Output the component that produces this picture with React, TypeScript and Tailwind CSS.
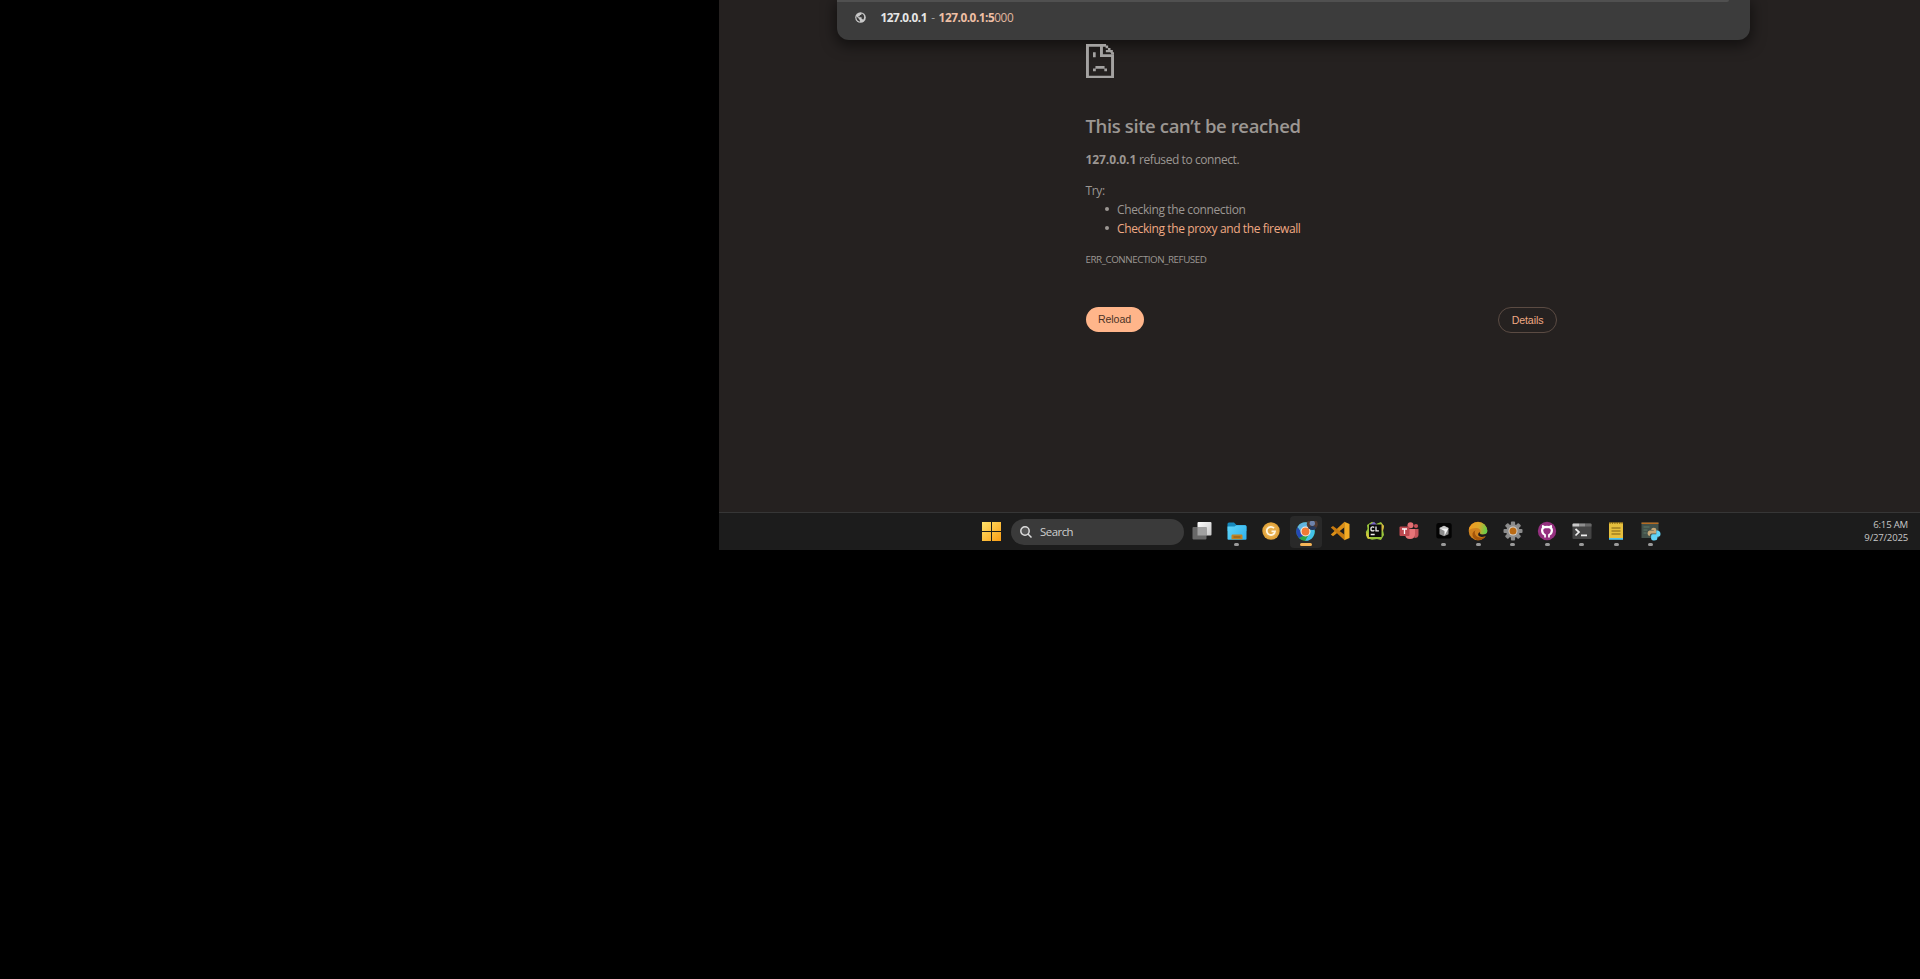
import React from "react";

const SEGOE = "font-['Open_Sans','Noto_Sans',sans-serif]";

function SadPage() {
  return (
    <svg className="block h-[34.5px] w-7" viewBox="0 0 12 15" preserveAspectRatio="none" fill="#a4a2a1">
      <path d="M0 0H8.6V1.200H1.250V13.750H10.750V5.700H6V1H7.250V4.500H12V15H0Z" />
      <path d="M3 3.600h1.150v2.200H3zM8.400 .6h1.100v1.200H8.400zM9.400 1.700h1.100v1.100H9.400zM8.500 2.600h2v1h-2zM10.400 2.600h1.100v1.200h-1.100zM10.750 3.600h1.250v1h-1.250zM4.050 9.600h3.900v1.200H4.050zM3 10.700h1.200v1.100H3zM7.850 10.700H9v1.100H7.850z" />
    </svg>
  );
}

function Globe() {
  return (
    <svg className="block size-[11px]" viewBox="0 0 24 24">
      <circle cx="12" cy="12" r="11.500" fill="#c8c8c8" />
      <path d="M3 9.500 9.500 16v1.500l1.500 1.200V21.500C5 20.500 2.500 16 3 9.500ZM14.500 3v1.500c0 1-.9 2-2 2h-2v2c0 .6-.5 1-1 1h-2v2h6c.6 0 1 .4 1 1v3h1c.9 0 1.700.6 1.900 1.400C21.500 13 21 5.500 14.500 3Z" fill="#3c3c3c" />
    </svg>
  );
}

function StartIcon() {
  return (
    <svg className="block size-[19px]" viewBox="0 0 19 19">
      <defs>
        <linearGradient id="start" x1="0" y1="0" x2="19" y2="19" gradientUnits="userSpaceOnUse">
          <stop stopColor="#ffe36a" />
          <stop offset="1" stopColor="#fa9d14" />
        </linearGradient>
      </defs>
      <path d="M0 0h9v9H0zM10 0h9v9h-9zM0 10h9v9H0zM10 10h9v9h-9z" fill="url(#start)" />
    </svg>
  );
}

function TaskView() {
  return (
    <svg className="block size-5" viewBox="0 0 20 20">
      <defs>
        <linearGradient id="tv" x1="5" y1="1" x2="19" y2="14" gradientUnits="userSpaceOnUse">
          <stop stopColor="#ffffff" />
          <stop offset="1" stopColor="#c9c9c9" />
        </linearGradient>
      </defs>
      <rect x="5.500" y="1" width="14" height="13.500" rx="1" fill="url(#tv)" />
      <rect x="0.500" y="6" width="14" height="12.500" rx="1" fill="#686868" />
      <path d="M5.500 6h9v8.500h-9z" fill="#a0a0a0" />
    </svg>
  );
}

function Folder() {
  return (
    <svg className="block size-5" viewBox="0 0 20 20">
      <defs>
        <linearGradient id="fo" x1="0" y1="3" x2="20" y2="19" gradientUnits="userSpaceOnUse">
          <stop stopColor="#62d8fb" />
          <stop offset="1" stopColor="#2fb0ec" />
        </linearGradient>
      </defs>
      <path d="M.5 3q0-1.500 1.500-1.500h5l2.500 2.500H18q1.500 0 1.500 1.500V10H.5Z" fill="#1689bd" />
      <path d="M.5 5.500h7l2-1.300H18q1.500 0 1.500 1.500V18q0 .8-1 .8h-17q-1 0-1-.8Z" fill="url(#fo)" />
      <path d="M4.500 18.300V14.700q0-1.200 1.200-1.200h8.600q1.200 0 1.200 1.200v3.600Z" fill="#c08324" />
      <path d="M6.500 15.500h7v1h-7z" fill="#8a5410" />
    </svg>
  );
}

function Coin() {
  return (
    <svg className="block size-5" viewBox="0 0 20 20">
      <circle cx="10" cy="10" r="8.700" fill="#e0a33a" />
      <circle cx="10" cy="10" r="6.800" fill="#e5ac4a" />
      <path d="M13 7.200A4.100 4.100 0 1 0 14 10.300H10.500" fill="none" stroke="#fff6df" strokeWidth="1.800" />
    </svg>
  );
}

function Chrome() {
  return (
    <svg className="block h-5 w-6" viewBox="0 0 24 20">
      <circle cx="11.500" cy="10.500" r="9.300" fill="#2f9e48" />
      <path d="M3.400 5.900A9.300 9.300 0 0 1 16 2.400L19 6H11L7 11Z" fill="#62b4e0" />
      <path d="M11.500 6h8A9.300 9.300 0 0 1 11 19.800L15 12Z" fill="#43c2e9" />
      <path d="M3.400 5.900A9.300 9.300 0 0 0 8 19.100L11 15 7 11Z" fill="#2448b5" />
      <path d="M11 19.800A9.300 9.300 0 0 1 5 17l6-3 4.500-1.500Z" fill="#2ea548" />
      <circle cx="11.500" cy="10.500" r="5" fill="#f5eee8" />
      <circle cx="11.500" cy="10.500" r="3.900" fill="#f07a35" />
      <circle cx="18.300" cy="3.300" r="5.500" fill="#513a31" />
      <circle cx="18.300" cy="2.300" r="2.700" fill="#6e83ac" />
      <path d="M14.500 7q4-4 8 0-4 4-8 0Z" fill="#25395e" />
    </svg>
  );
}

function VsCode() {
  return (
    <svg className="block size-5" viewBox="0 0 20 20">
      <path d="M14.500.8v5.500L3 15.200.8 13.500Z" fill="#dc8f17" />
      <path d="M14.500 19.300v-5.500L3 4.900.8 6.600Z" fill="#c87b10" />
      <path d="M14.300.8 19.500 3v14l-5.200 2.300Z" fill="#f2ab25" />
    </svg>
  );
}

function CLion() {
  return (
    <svg className="block size-5" viewBox="0 0 20 20">
      <path d="M2 4 7 .8 11 3l5-2 3 4-1 4 1 5-3 5-4-1-5 .8L2 17 .8 11 2.500 8Z" fill="#98c43c" />
      <path d="M5 3.500l4-2.700 3 3.200H5Z" fill="#7a65c8" />
      <path d="m16 2 3 3-1 5-2-1Z" fill="#d6b840" />
      <path d="M2 10l-1 4 2 4 3-1-2-2Z" fill="#d3c63c" />
      <rect x="4" y="3.500" width="12.500" height="12.500" fill="#090909" />
      <path d="M9.200 6.500Q8.500 5.900 7.700 5.900 5.900 5.900 5.900 7.900T7.700 9.900Q8.600 9.900 9.300 9.200M11 5.400v4.400h2.900M5.700 13.500h4" fill="none" stroke="#eee" strokeWidth="1.300" />
    </svg>
  );
}

function Teams() {
  return (
    <svg className="block size-5" viewBox="0 0 20 20">
      <circle cx="11.500" cy="4.200" r="3" fill="#e36e72" />
      <circle cx="17" cy="5" r="2.100" fill="#c95359" />
      <path d="M14 8h5.500v5.500q0 3.500-4 3.500Z" fill="#c4545a" />
      <path d="M6 8h10v5q0 5-5 5t-5-5Z" fill="#e67478" />
      <rect x=".5" y="5.500" width="10" height="9.500" rx="1" fill="#bd4950" />
      <path d="M3 8h5M5.500 8v5" stroke="#fff" strokeWidth="1.300" />
    </svg>
  );
}

function Cursor() {
  return (
    <svg className="block size-5" viewBox="0 0 20 20">
      <rect x="2.300" y="2" width="15.400" height="15.500" rx="2.500" fill="#030303" />
      <path d="m10 4.800 4.500 2v6.500L10 15.300l-4.500-2V6.800Z" fill="#8d8d8d" />
      <path d="M5.500 7.200h9L10.500 14.800V10Z" fill="#f4f4f4" />
      <path d="m10 4.800 4.500 2.400h-9Z" fill="#c4c4c4" />
    </svg>
  );
}

function Edge() {
  return (
    <svg className="block size-5" viewBox="0 0 20 20">
      <defs>
        <linearGradient id="ed" x1="1" y1="4" x2="19" y2="8" gradientUnits="userSpaceOnUse">
          <stop stopColor="#f29a1f" />
          <stop offset=".55" stopColor="#dba72b" />
          <stop offset="1" stopColor="#5fd04c" />
        </linearGradient>
      </defs>
      <circle cx="10" cy="10" r="9.300" fill="#d0821e" />
      <path d="M.8 9A9.300 9.300 0 0 1 19.300 9.500q0 4-4.300 4-3 0-3.200-1.300.9-.8.700-2.200-.4-2.700-4-3Q4 6.800.8 9Z" fill="url(#ed)" />
      <path d="M7 10q-1 4 3 6 4 1.500 7.500-.5Q14 20 9 19.200 4 17 4.500 12.500 5 10 8 9Z" fill="#a4560b" />
      <path d="M11.800 12.200q.3 1.300 3.200 1.300 3 0 4.600-2l.4 3-2.500.8q-5 1.500-7-.5-1-2 1-4Z" fill="#1c1c1c" />
    </svg>
  );
}

function Gear() {
  return (
    <svg className="block size-5" viewBox="0 0 20 20">
      <g fill="#8b8b8b">
        <rect x="7.900" y=".5" width="4.200" height="19" rx="1" />
        <rect x="7.900" y=".5" width="4.200" height="19" rx="1" transform="rotate(45 10 10)" />
        <rect x="7.900" y=".5" width="4.200" height="19" rx="1" transform="rotate(90 10 10)" />
        <rect x="7.900" y=".5" width="4.200" height="19" rx="1" transform="rotate(135 10 10)" />
      </g>
      <circle cx="10" cy="10" r="6.800" fill="#8f8f8f" />
      <circle cx="10" cy="10" r="4.500" fill="#d8d0c6" />
      <circle cx="10" cy="10" r="3.500" fill="#ba6a13" />
    </svg>
  );
}

function GitHub() {
  return (
    <svg className="block size-5" viewBox="0 0 20 20">
      <circle cx="10" cy="10" r="9.200" fill="#953080" />
      <path d="M7.200 16.500v-2Q4 13 4 9.200q0-1.600 1-2.600-.3-1.300.2-2.500 1.300.1 2.500 1 2.200-.6 4.500 0 1.300-.9 2.600-1 .5 1.200.2 2.500 1 1 1 2.600 0 3.800-3.200 5.300v2Z" fill="#fff" />
      <path d="M8.900 17v-3.500Q6.500 12.800 6.200 9.500q0-2.100 1.800-2.300h4q1.800.2 1.800 2.300-.3 3.300-2.700 4V17Z" fill="#953080" />
    </svg>
  );
}

function Terminal() {
  return (
    <svg className="block size-5" viewBox="0 0 20 20">
      <rect x=".5" y="2.500" width="19" height="15.500" rx="1" fill="#444" />
      <path d="M.5 5.500v-2q0-1 1-1H7v3Z" fill="#c9c9c9" />
      <path d="M7 2.500h6v3H7z" fill="#8e8e8e" />
      <path d="M13 2.500h5.500q1 0 1 1v2H13Z" fill="#686868" />
      <path d="m3.500 8 3.500 3-3.500 3.500M9 14.300h6" fill="none" stroke="#eee" strokeWidth="1.700" />
    </svg>
  );
}

function Notes() {
  return (
    <svg className="block size-5" viewBox="0 0 20 20">
      <rect x="3" y="1.500" width="14" height="16" fill="#e6bf3d" />
      <path d="M3 17h14v1.800H3z" fill="#4fc3f0" />
      <path d="M3.500 1.800h13" stroke="#7a5b10" strokeWidth="1.800" strokeDasharray="1.200 1.200" />
      <path d="M5.500 7h9M5.500 10h9M5.500 13h9" stroke="#7c6015" strokeWidth="1.200" />
    </svg>
  );
}

function PythonWindow() {
  return (
    <svg className="block h-5 w-6" viewBox="0 0 24 20">
      <rect x="2.500" y="1.500" width="17" height="15.500" fill="#43514a" />
      <path d="M2.500 1.500h17v1.500h-17z" fill="#b56b22" />
      <path d="M4.500 6h6M4.500 9h4M4.500 12h3" stroke="#5e7a68" />
      <path d="M12.300 8.500q0-1.700 2.500-1.700t2.500 1.700v4h-5q-1.500 0-1.500 2.500-2.300-.3-2.300-2.700t2-2.800h4.300v-.5h-2.500Z" fill="#c7a878" />
      <path d="M17.300 12.500V9.500h1.500q2.700.5 2.700 3.500 0 2.700-2.200 2.700h-1v1.800q0 1.900-3 1.900t-3.200-2v-2.400q0-1.700 1.500-1.700h3.700Z" fill="#62d3f5" />
    </svg>
  );
}

type App = { name: string; icon: React.ReactNode; open?: boolean; active?: boolean };

const apps: App[] = [
  { name: "Task View", icon: <TaskView /> },
  { name: "File Explorer", icon: <Folder />, open: true },
  { name: "Coin", icon: <Coin /> },
  { name: "Chrome", icon: <Chrome />, active: true },
  { name: "VS Code", icon: <VsCode /> },
  { name: "CLion", icon: <CLion /> },
  { name: "Teams", icon: <Teams /> },
  { name: "Cursor", icon: <Cursor />, open: true },
  { name: "Edge", icon: <Edge />, open: true },
  { name: "Settings", icon: <Gear />, open: true },
  { name: "GitHub", icon: <GitHub />, open: true },
  { name: "Terminal", icon: <Terminal />, open: true },
  { name: "Notes", icon: <Notes />, open: true },
  { name: "Python", icon: <PythonWindow />, open: true },
];

function TaskbarApp({ app }: { app: App }) {
  return (
    <div className="flex w-[34.5px] shrink-0 justify-center">
      <div className={`flex h-8 w-8 flex-col items-center rounded-sm pt-[5.5px] ${app.active ? "bg-[#292929]" : ""}`}>
        {app.icon}
        {app.open && <span className="mt-[2px] h-[2.5px] w-[5px] rounded-full bg-[#9a9a9a]" />}
        {app.active && <span className="mt-[2px] h-[2.5px] w-[12px] rounded-full bg-[#f5b557]" />}
      </div>
    </div>
  );
}

function Suggestions() {
  return (
    <div className="ml-[117.5px] h-[39.5px] w-[913px] rounded-b-[12px] bg-[#3c3c3c] shadow-[0_4px_14px_2px_rgba(0,0,0,0.5)]">
      <div className="h-[2px] w-[892px] rounded-br-[6px] bg-[#505050]" />
      <div className="flex items-center pt-[5px] pl-[18px]">
        <Globe />
        <p className="ml-[15px] flex h-[21px] items-center text-[11.8px] tracking-[-0.45px] whitespace-pre">
          <b className="text-[#e6e6e6]">127.0.0.1</b>
          <span className="px-[1.5px] text-[#a0a0a0]"> - </span>
          <b className="text-[#eebfa4]">127.0.0.1:5</b>
          <span className="text-[#e0b79f]">000</span>
        </p>
      </div>
    </div>
  );
}

function ErrorPage() {
  return (
    <main className="ml-[366.5px] w-[471.5px] pt-[4px] text-[12px] leading-[19px] tracking-[-0.38px] text-[#9c9793]">
      <SadPage />
      <h1 className="mt-[35px] text-[18.5px] leading-[26px] font-semibold tracking-[-0.38px]">This site can’t be reached</h1>
      <p className="mt-[10.5px]">
        <b className="tracking-[-0.08px]">127.0.0.1</b> <span className="tracking-[-0.42px]">refused to connect.</span>
      </p>
      <p className="mt-[12px]">Try:</p>
      <ul>
        <li className="flex items-center pl-[19px]">
          <span className="mr-[8px] size-[4.5px] rounded-full bg-[#9c9793]" />
          Checking the connection
        </li>
        <li className="flex items-center pl-[19px] text-[#f0a984]">
          <span className="mr-[8px] size-[4.5px] rounded-full bg-[#9c9793]" />
          Checking the proxy and the firewall
        </li>
      </ul>
      <p className="mt-[12px] text-[9.8px] tracking-[-0.46px]">ERR_CONNECTION_REFUSED</p>
      <div className="mt-[38.5px] flex justify-between font-['Liberation_Sans',Arial,sans-serif] text-[10.6px] tracking-[-0.1px]">
        <button className="h-[25px] w-[58px] rounded-full bg-[#ffb58a] text-[#4a3226]">Reload</button>
        <button className="h-[26px] w-[59px] rounded-full border border-[#5b4b43] text-[#f0a984]">Details</button>
      </div>
    </main>
  );
}

function Taskbar() {
  return (
    <footer className="flex h-[38px] items-center border-t border-[#363636] bg-[#1c1c1c] pl-[263px]">
      <StartIcon />
      <div className="mr-[1px] ml-[10px] flex h-[26px] w-[173px] shrink-0 items-center rounded-full bg-[#3a3a3a] pl-[9px]">
        <svg className="size-3" viewBox="0 0 12 12" fill="none" stroke="#dcdcdc" strokeWidth="1.5">
          <circle cx="5" cy="5" r="4.200" fill="#555" />
          <path d="m8 8 3.500 3.500" />
        </svg>
        <span className="ml-[8px] text-[11.4px] tracking-[-0.5px] text-[#cfcfcf]">Search</span>
      </div>
      {apps.map((app) => (
        <TaskbarApp key={app.name} app={app} />
      ))}
      <div className="ml-auto pr-[12px] text-right text-[9.6px] leading-[12.5px] tracking-[-0.2px] text-[#c8c8c8]">
        <p>6:15 AM</p>
        <p>9/27/2025</p>
      </div>
    </footer>
  );
}

export default function App() {
  return (
    <div className="h-[979px] w-[1920px] overflow-hidden bg-black pl-[719px]">
      <div className={`flex h-[550px] w-[1201px] flex-col overflow-hidden bg-[#252120] ${SEGOE}`}>
        <Suggestions />
        <div className="flex-1">
          <ErrorPage />
        </div>
        <Taskbar />
      </div>
    </div>
  );
}
